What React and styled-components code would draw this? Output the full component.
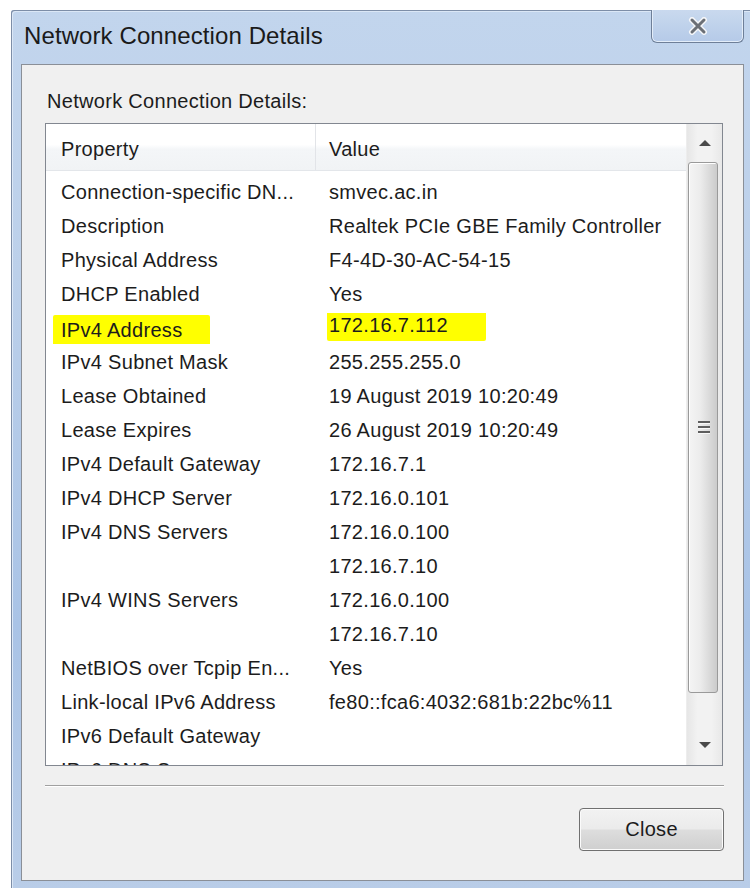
import React from 'react';
import styled, { createGlobalStyle } from 'styled-components';

const GlobalStyle = createGlobalStyle`
  html, body {
    margin: 0;
    padding: 0;
    background: #ffffff;
    overflow: hidden;
  }
  body {
    font-family: "Liberation Sans", Arial, sans-serif;
    color: #1c1c1c;
  }
`;

const Window = styled.div`
  margin: 10px 0 0 11px;
  width: 745px;
  height: 878px;
  box-sizing: border-box;
  padding: 0 12px 7px 10px;
  display: flex;
  flex-direction: column;
  background: linear-gradient(180deg, #c2d5ed 0%, #bcd0ea 30%, #a9c3e6 70%, #b9cde8 100%);
  box-shadow: inset 1px 1px 0 #7d8ea8, inset 2px 2px 0 #dbe7f6;
  border-top-left-radius: 3px;
`;

const TitleBar = styled.div`
  height: 54px;
  display: flex;
  align-items: flex-start;
  flex-shrink: 0;
`;

const Title = styled.div`
  margin: 12px 0 0 3px;
  font-size: 24px;
  line-height: 28px;
  color: #1a1a1a;
  letter-spacing: 0.1px;
`;

const CloseBox = styled.div`
  margin-left: auto;
  width: 93px;
  height: 33px;
  box-sizing: border-box;
  border: 1px solid #6e7f98;
  border-top: none;
  border-radius: 0 0 6px 6px;
  background: linear-gradient(180deg, #c9d9ee 0%, #bfd2eb 50%, #b5cae8 100%);
  box-shadow: inset 0 -1px 0 #e3edf9, inset 1px 0 0 #e3edf9, inset -1px 0 0 #e3edf9;
  display: flex;
  align-items: center;
  justify-content: center;
`;

const Client = styled.div`
  flex: 1;
  background: #f0f0f0;
  border: 1px solid #8a8f97;
  padding: 24px 20px 0 23px;
  display: flex;
  flex-direction: column;
`;

const GroupLabel = styled.div`
  font-size: 20px;
  line-height: 24px;
  letter-spacing: 0.3px;
  padding-left: 2px;
  margin-bottom: 10px;
`;

const ListBox = styled.div`
  height: 643px;
  flex-shrink: 0;
  box-sizing: border-box;
  border: 1px solid #828790;
  background: #ffffff;
  display: flex;
  overflow: hidden;
`;

const Table = styled.div`
  flex: 1;
  overflow: hidden;
`;

const Header = styled.div`
  height: 47px;
  display: grid;
  grid-template-columns: 270px 1fr;
  background: linear-gradient(180deg, #ffffff 0%, #ffffff 45%, #f4f6f8 55%, #f1f3f5 100%);
  border-bottom: 1px solid #e3e6ea;
  box-sizing: border-box;
`;

const HeaderCell = styled.div`
  display: flex;
  align-items: center;
  font-size: 20px;
  letter-spacing: 0.3px;
  padding: 5px 0 0 ${p => p.pad}px;
  border-right: ${p => (p.divider ? '1px solid #e2e4e8' : 'none')};
`;

const Rows = styled.div`
  padding-top: 4px;
`;

const Row = styled.div`
  display: grid;
  grid-template-columns: 270px 1fr;
  height: 34px;
  align-items: center;
  font-size: 20px;
  letter-spacing: 0.3px;
  white-space: nowrap;
`;

const Cell = styled.div`
  padding-left: ${p => p.pad}px;
  overflow: hidden;
`;

const Marker = styled.span`
  display: inline-block;
  background: #ffff00;
  line-height: 31px;
  padding: 0 ${p => p.right}px 0 ${p => p.left}px;
  margin-left: -${p => p.left}px;
  transform: translateY(${p => p.shift}px);
  border-radius: 2px;
`;

const ScrollBar = styled.div`
  width: 35px;
  flex-shrink: 0;
  display: flex;
  flex-direction: column;
  background: linear-gradient(90deg, #e6e6e6 0%, #f2f2f2 30%, #f2f2f2 70%, #e8e8e8 100%);
  border-left: 1px solid #ededed;
`;

const ArrowButton = styled.div`
  height: ${p => p.h}px;
  flex-shrink: 0;
  display: flex;
  align-items: ${p => (p.down ? 'flex-end' : 'center')};
  padding-bottom: ${p => (p.down ? 14 : 0)}px;
  box-sizing: border-box;
  justify-content: center;
`;

const Thumb = styled.div`
  height: 531px;
  flex-shrink: 0;
  margin: 0 4px 0 1px;
  box-sizing: border-box;
  border: 1px solid #9a9a9a;
  border-radius: 3px;
  background: linear-gradient(90deg, #f4f4f4 0%, #ececec 40%, #d9d9d9 75%, #cbcbcb 100%);
  box-shadow: inset 1px 1px 0 #ffffff;
  display: flex;
  align-items: center;
  justify-content: center;
`;

const Grip = styled.div`
  width: 12px;
  display: flex;
  flex-direction: column;
  gap: 2px;
  margin-left: 2px;
  span {
    display: block;
    height: 2px;
    background: #5e5e5e;
    border-bottom: 1px solid #f8f8f8;
  }
`;

const Separator = styled.div`
  height: 1px;
  margin: 19px 0 0 0;
  width: 679px;
  background: #a0a0a0;
  border-bottom: 1px solid #ffffff;
`;

const Footer = styled.div`
  width: 679px;
  display: flex;
  justify-content: flex-end;
  padding-top: 21px;
`;

const Button = styled.button`
  width: 145px;
  height: 43px;
  box-sizing: border-box;
  border: 1px solid #707070;
  border-radius: 4px;
  background: linear-gradient(180deg, #f2f2f2 0%, #ebebeb 48%, #dddddd 52%, #cfcfcf 100%);
  box-shadow: inset 0 0 0 1px #fbfbfb;
  font-family: "Liberation Sans", Arial, sans-serif;
  font-size: 20px;
  letter-spacing: 0.3px;
  color: #1c1c1c;
  padding: 0;
`;

const details = [
  ['Connection-specific DN...', 'smvec.ac.in'],
  ['Description', 'Realtek PCIe GBE Family Controller'],
  ['Physical Address', 'F4-4D-30-AC-54-15'],
  ['DHCP Enabled', 'Yes'],
  ['IPv4 Address', '172.16.7.112', true],
  ['IPv4 Subnet Mask', '255.255.255.0'],
  ['Lease Obtained', '19 August 2019 10:20:49'],
  ['Lease Expires', '26 August 2019 10:20:49'],
  ['IPv4 Default Gateway', '172.16.7.1'],
  ['IPv4 DHCP Server', '172.16.0.101'],
  ['IPv4 DNS Servers', '172.16.0.100'],
  ['', '172.16.7.10'],
  ['IPv4 WINS Servers', '172.16.0.100'],
  ['', '172.16.7.10'],
  ['NetBIOS over Tcpip En...', 'Yes'],
  ['Link-local IPv6 Address', 'fe80::fca6:4032:681b:22bc%11'],
  ['IPv6 Default Gateway', ''],
  ['IPv6 DNS Servers', ''],
];

const CloseGlyph = () => (
  <svg width="22" height="18" viewBox="0 0 22 18">
    <path d="M5 3 L17 15 M17 3 L5 15" stroke="#f4f6f9" strokeWidth="6" strokeLinecap="round" />
    <path d="M5 3 L17 15 M17 3 L5 15" stroke="#6b6f76" strokeWidth="3" strokeLinecap="round" />
  </svg>
);

const Arrow = ({ down }) => (
  <svg width="14" height="8" viewBox="0 0 14 8">
    <path d={down ? 'M1 1 L13 1 L7 7 Z' : 'M1 7 L13 7 L7 1 Z'} fill="#4a4a4a" />
  </svg>
);

export default function App() {
  return (
    <>
      <GlobalStyle />
      <Window>
        <TitleBar>
          <Title>Network Connection Details</Title>
          <CloseBox>
            <CloseGlyph />
          </CloseBox>
        </TitleBar>
        <Client>
          <GroupLabel>Network Connection Details:</GroupLabel>
          <ListBox>
            <Table>
              <Header>
                <HeaderCell pad={15} divider>Property</HeaderCell>
                <HeaderCell pad={13}>Value</HeaderCell>
              </Header>
              <Rows>
                {details.map(([name, value, marked], i) => (
                  <Row key={i}>
                    <Cell pad={15}>
                      {marked ? <Marker left={8} right={28} shift={2}>{name}</Marker> : name}
                    </Cell>
                    <Cell pad={13}>
                      {marked ? <Marker left={2} right={38} shift={-3}>{value}</Marker> : value}
                    </Cell>
                  </Row>
                ))}
              </Rows>
            </Table>
            <ScrollBar>
              <ArrowButton h={38}><Arrow /></ArrowButton>
              <Thumb>
                <Grip><span /><span /><span /></Grip>
              </Thumb>
              <ArrowButton h={70} down>
                <Arrow down />
              </ArrowButton>
            </ScrollBar>
          </ListBox>
          <Separator />
          <Footer>
            <Button>Close</Button>
          </Footer>
        </Client>
      </Window>
    </>
  );
}
